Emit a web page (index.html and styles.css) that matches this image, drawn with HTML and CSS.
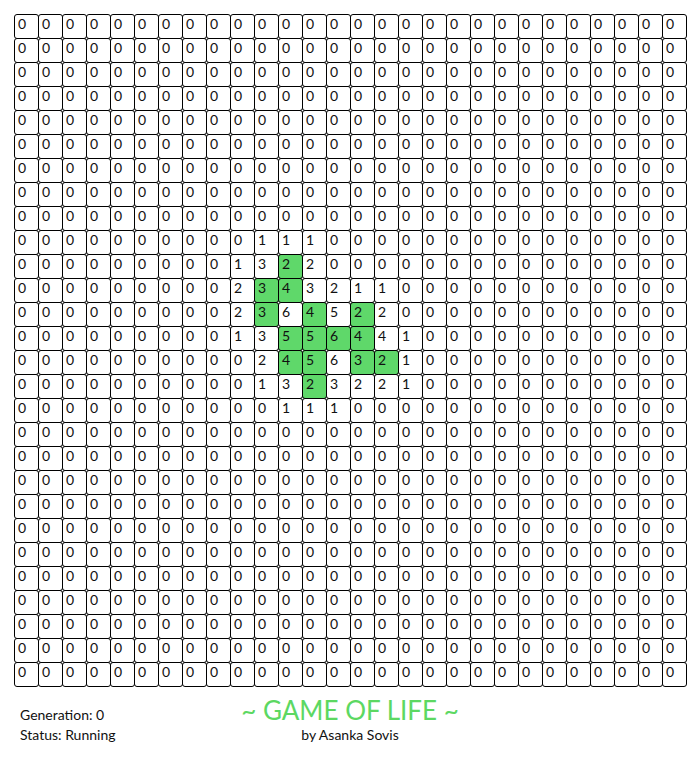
FILE: index.html
```html
<!DOCTYPE html>
<html>
<head>
<meta charset="utf-8">
<link rel="stylesheet" href="styles.css">
</head>
<body>
<div class="page">
<div class="grid">
<span>0</span><span>0</span><span>0</span><span>0</span><span>0</span><span>0</span><span>0</span><span>0</span><span>0</span><span>0</span><span>0</span><span>0</span><span>0</span><span>0</span><span>0</span><span>0</span><span>0</span><span>0</span><span>0</span><span>0</span><span>0</span><span>0</span><span>0</span><span>0</span><span>0</span><span>0</span><span>0</span><span>0</span>
<span>0</span><span>0</span><span>0</span><span>0</span><span>0</span><span>0</span><span>0</span><span>0</span><span>0</span><span>0</span><span>0</span><span>0</span><span>0</span><span>0</span><span>0</span><span>0</span><span>0</span><span>0</span><span>0</span><span>0</span><span>0</span><span>0</span><span>0</span><span>0</span><span>0</span><span>0</span><span>0</span><span>0</span>
<span>0</span><span>0</span><span>0</span><span>0</span><span>0</span><span>0</span><span>0</span><span>0</span><span>0</span><span>0</span><span>0</span><span>0</span><span>0</span><span>0</span><span>0</span><span>0</span><span>0</span><span>0</span><span>0</span><span>0</span><span>0</span><span>0</span><span>0</span><span>0</span><span>0</span><span>0</span><span>0</span><span>0</span>
<span>0</span><span>0</span><span>0</span><span>0</span><span>0</span><span>0</span><span>0</span><span>0</span><span>0</span><span>0</span><span>0</span><span>0</span><span>0</span><span>0</span><span>0</span><span>0</span><span>0</span><span>0</span><span>0</span><span>0</span><span>0</span><span>0</span><span>0</span><span>0</span><span>0</span><span>0</span><span>0</span><span>0</span>
<span>0</span><span>0</span><span>0</span><span>0</span><span>0</span><span>0</span><span>0</span><span>0</span><span>0</span><span>0</span><span>0</span><span>0</span><span>0</span><span>0</span><span>0</span><span>0</span><span>0</span><span>0</span><span>0</span><span>0</span><span>0</span><span>0</span><span>0</span><span>0</span><span>0</span><span>0</span><span>0</span><span>0</span>
<span>0</span><span>0</span><span>0</span><span>0</span><span>0</span><span>0</span><span>0</span><span>0</span><span>0</span><span>0</span><span>0</span><span>0</span><span>0</span><span>0</span><span>0</span><span>0</span><span>0</span><span>0</span><span>0</span><span>0</span><span>0</span><span>0</span><span>0</span><span>0</span><span>0</span><span>0</span><span>0</span><span>0</span>
<span>0</span><span>0</span><span>0</span><span>0</span><span>0</span><span>0</span><span>0</span><span>0</span><span>0</span><span>0</span><span>0</span><span>0</span><span>0</span><span>0</span><span>0</span><span>0</span><span>0</span><span>0</span><span>0</span><span>0</span><span>0</span><span>0</span><span>0</span><span>0</span><span>0</span><span>0</span><span>0</span><span>0</span>
<span>0</span><span>0</span><span>0</span><span>0</span><span>0</span><span>0</span><span>0</span><span>0</span><span>0</span><span>0</span><span>0</span><span>0</span><span>0</span><span>0</span><span>0</span><span>0</span><span>0</span><span>0</span><span>0</span><span>0</span><span>0</span><span>0</span><span>0</span><span>0</span><span>0</span><span>0</span><span>0</span><span>0</span>
<span>0</span><span>0</span><span>0</span><span>0</span><span>0</span><span>0</span><span>0</span><span>0</span><span>0</span><span>0</span><span>0</span><span>0</span><span>0</span><span>0</span><span>0</span><span>0</span><span>0</span><span>0</span><span>0</span><span>0</span><span>0</span><span>0</span><span>0</span><span>0</span><span>0</span><span>0</span><span>0</span><span>0</span>
<span>0</span><span>0</span><span>0</span><span>0</span><span>0</span><span>0</span><span>0</span><span>0</span><span>0</span><span>0</span><span>1</span><span>1</span><span>1</span><span>0</span><span>0</span><span>0</span><span>0</span><span>0</span><span>0</span><span>0</span><span>0</span><span>0</span><span>0</span><span>0</span><span>0</span><span>0</span><span>0</span><span>0</span>
<span>0</span><span>0</span><span>0</span><span>0</span><span>0</span><span>0</span><span>0</span><span>0</span><span>0</span><span>1</span><span>3</span><span class="on">2</span><span>2</span><span>0</span><span>0</span><span>0</span><span>0</span><span>0</span><span>0</span><span>0</span><span>0</span><span>0</span><span>0</span><span>0</span><span>0</span><span>0</span><span>0</span><span>0</span>
<span>0</span><span>0</span><span>0</span><span>0</span><span>0</span><span>0</span><span>0</span><span>0</span><span>0</span><span>2</span><span class="on">3</span><span class="on">4</span><span>3</span><span>2</span><span>1</span><span>1</span><span>0</span><span>0</span><span>0</span><span>0</span><span>0</span><span>0</span><span>0</span><span>0</span><span>0</span><span>0</span><span>0</span><span>0</span>
<span>0</span><span>0</span><span>0</span><span>0</span><span>0</span><span>0</span><span>0</span><span>0</span><span>0</span><span>2</span><span class="on">3</span><span>6</span><span class="on">4</span><span>5</span><span class="on">2</span><span>2</span><span>0</span><span>0</span><span>0</span><span>0</span><span>0</span><span>0</span><span>0</span><span>0</span><span>0</span><span>0</span><span>0</span><span>0</span>
<span>0</span><span>0</span><span>0</span><span>0</span><span>0</span><span>0</span><span>0</span><span>0</span><span>0</span><span>1</span><span>3</span><span class="on">5</span><span class="on">5</span><span class="on">6</span><span class="on">4</span><span>4</span><span>1</span><span>0</span><span>0</span><span>0</span><span>0</span><span>0</span><span>0</span><span>0</span><span>0</span><span>0</span><span>0</span><span>0</span>
<span>0</span><span>0</span><span>0</span><span>0</span><span>0</span><span>0</span><span>0</span><span>0</span><span>0</span><span>0</span><span>2</span><span class="on">4</span><span class="on">5</span><span>6</span><span class="on">3</span><span class="on">2</span><span>1</span><span>0</span><span>0</span><span>0</span><span>0</span><span>0</span><span>0</span><span>0</span><span>0</span><span>0</span><span>0</span><span>0</span>
<span>0</span><span>0</span><span>0</span><span>0</span><span>0</span><span>0</span><span>0</span><span>0</span><span>0</span><span>0</span><span>1</span><span>3</span><span class="on">2</span><span>3</span><span>2</span><span>2</span><span>1</span><span>0</span><span>0</span><span>0</span><span>0</span><span>0</span><span>0</span><span>0</span><span>0</span><span>0</span><span>0</span><span>0</span>
<span>0</span><span>0</span><span>0</span><span>0</span><span>0</span><span>0</span><span>0</span><span>0</span><span>0</span><span>0</span><span>0</span><span>1</span><span>1</span><span>1</span><span>0</span><span>0</span><span>0</span><span>0</span><span>0</span><span>0</span><span>0</span><span>0</span><span>0</span><span>0</span><span>0</span><span>0</span><span>0</span><span>0</span>
<span>0</span><span>0</span><span>0</span><span>0</span><span>0</span><span>0</span><span>0</span><span>0</span><span>0</span><span>0</span><span>0</span><span>0</span><span>0</span><span>0</span><span>0</span><span>0</span><span>0</span><span>0</span><span>0</span><span>0</span><span>0</span><span>0</span><span>0</span><span>0</span><span>0</span><span>0</span><span>0</span><span>0</span>
<span>0</span><span>0</span><span>0</span><span>0</span><span>0</span><span>0</span><span>0</span><span>0</span><span>0</span><span>0</span><span>0</span><span>0</span><span>0</span><span>0</span><span>0</span><span>0</span><span>0</span><span>0</span><span>0</span><span>0</span><span>0</span><span>0</span><span>0</span><span>0</span><span>0</span><span>0</span><span>0</span><span>0</span>
<span>0</span><span>0</span><span>0</span><span>0</span><span>0</span><span>0</span><span>0</span><span>0</span><span>0</span><span>0</span><span>0</span><span>0</span><span>0</span><span>0</span><span>0</span><span>0</span><span>0</span><span>0</span><span>0</span><span>0</span><span>0</span><span>0</span><span>0</span><span>0</span><span>0</span><span>0</span><span>0</span><span>0</span>
<span>0</span><span>0</span><span>0</span><span>0</span><span>0</span><span>0</span><span>0</span><span>0</span><span>0</span><span>0</span><span>0</span><span>0</span><span>0</span><span>0</span><span>0</span><span>0</span><span>0</span><span>0</span><span>0</span><span>0</span><span>0</span><span>0</span><span>0</span><span>0</span><span>0</span><span>0</span><span>0</span><span>0</span>
<span>0</span><span>0</span><span>0</span><span>0</span><span>0</span><span>0</span><span>0</span><span>0</span><span>0</span><span>0</span><span>0</span><span>0</span><span>0</span><span>0</span><span>0</span><span>0</span><span>0</span><span>0</span><span>0</span><span>0</span><span>0</span><span>0</span><span>0</span><span>0</span><span>0</span><span>0</span><span>0</span><span>0</span>
<span>0</span><span>0</span><span>0</span><span>0</span><span>0</span><span>0</span><span>0</span><span>0</span><span>0</span><span>0</span><span>0</span><span>0</span><span>0</span><span>0</span><span>0</span><span>0</span><span>0</span><span>0</span><span>0</span><span>0</span><span>0</span><span>0</span><span>0</span><span>0</span><span>0</span><span>0</span><span>0</span><span>0</span>
<span>0</span><span>0</span><span>0</span><span>0</span><span>0</span><span>0</span><span>0</span><span>0</span><span>0</span><span>0</span><span>0</span><span>0</span><span>0</span><span>0</span><span>0</span><span>0</span><span>0</span><span>0</span><span>0</span><span>0</span><span>0</span><span>0</span><span>0</span><span>0</span><span>0</span><span>0</span><span>0</span><span>0</span>
<span>0</span><span>0</span><span>0</span><span>0</span><span>0</span><span>0</span><span>0</span><span>0</span><span>0</span><span>0</span><span>0</span><span>0</span><span>0</span><span>0</span><span>0</span><span>0</span><span>0</span><span>0</span><span>0</span><span>0</span><span>0</span><span>0</span><span>0</span><span>0</span><span>0</span><span>0</span><span>0</span><span>0</span>
<span>0</span><span>0</span><span>0</span><span>0</span><span>0</span><span>0</span><span>0</span><span>0</span><span>0</span><span>0</span><span>0</span><span>0</span><span>0</span><span>0</span><span>0</span><span>0</span><span>0</span><span>0</span><span>0</span><span>0</span><span>0</span><span>0</span><span>0</span><span>0</span><span>0</span><span>0</span><span>0</span><span>0</span>
<span>0</span><span>0</span><span>0</span><span>0</span><span>0</span><span>0</span><span>0</span><span>0</span><span>0</span><span>0</span><span>0</span><span>0</span><span>0</span><span>0</span><span>0</span><span>0</span><span>0</span><span>0</span><span>0</span><span>0</span><span>0</span><span>0</span><span>0</span><span>0</span><span>0</span><span>0</span><span>0</span><span>0</span>
<span>0</span><span>0</span><span>0</span><span>0</span><span>0</span><span>0</span><span>0</span><span>0</span><span>0</span><span>0</span><span>0</span><span>0</span><span>0</span><span>0</span><span>0</span><span>0</span><span>0</span><span>0</span><span>0</span><span>0</span><span>0</span><span>0</span><span>0</span><span>0</span><span>0</span><span>0</span><span>0</span><span>0</span>
</div>
<div class="footer">
<div class="info">
<div>Generation: 0</div>
<div>Status: Running</div>
</div>
<div class="title">
<div class="name">~ GAME OF LIFE ~</div>
<div class="author">by Asanka Sovis</div>
</div>
<div></div>
</div>
</div>
</body>
</html>
```

FILE: styles.css
```css
html, body {
  margin: 0;
  padding: 0;
  background: #ffffff;
}
body {
  font-family: "Lato", "Noto Sans", sans-serif;
  color: #111111;
}
.page {
  padding: 14px 14px 0 14px;
}
.grid {
  display: grid;
  grid-template-columns: repeat(28, 24px);
  grid-auto-rows: 24px;
  width: 673px;
}
.grid span {
  box-sizing: border-box;
  width: 25px;
  height: 25px;
  border: 1px solid #000000;
  border-radius: 3px;
  padding: 0 0 0 3px;
  font-size: 14px;
  line-height: 18px;
  color: #111111;
  background: #ffffff;
}
.grid span.on {
  background: #5fd86a;
}
.footer {
  display: grid;
  grid-template-columns: 1fr auto 1fr;
  margin-top: 14px;
}
.info {
  padding-left: 6px;
  font-size: 14px;
  line-height: 20px;
  padding-top: 5px;
}
.title {
  text-align: center;
}
.name {
  font-size: 26px;
  line-height: 20px;
  color: #5cd862;
}
.author {
  font-size: 14px;
  line-height: 20px;
  margin-top: 5px;
}
```
